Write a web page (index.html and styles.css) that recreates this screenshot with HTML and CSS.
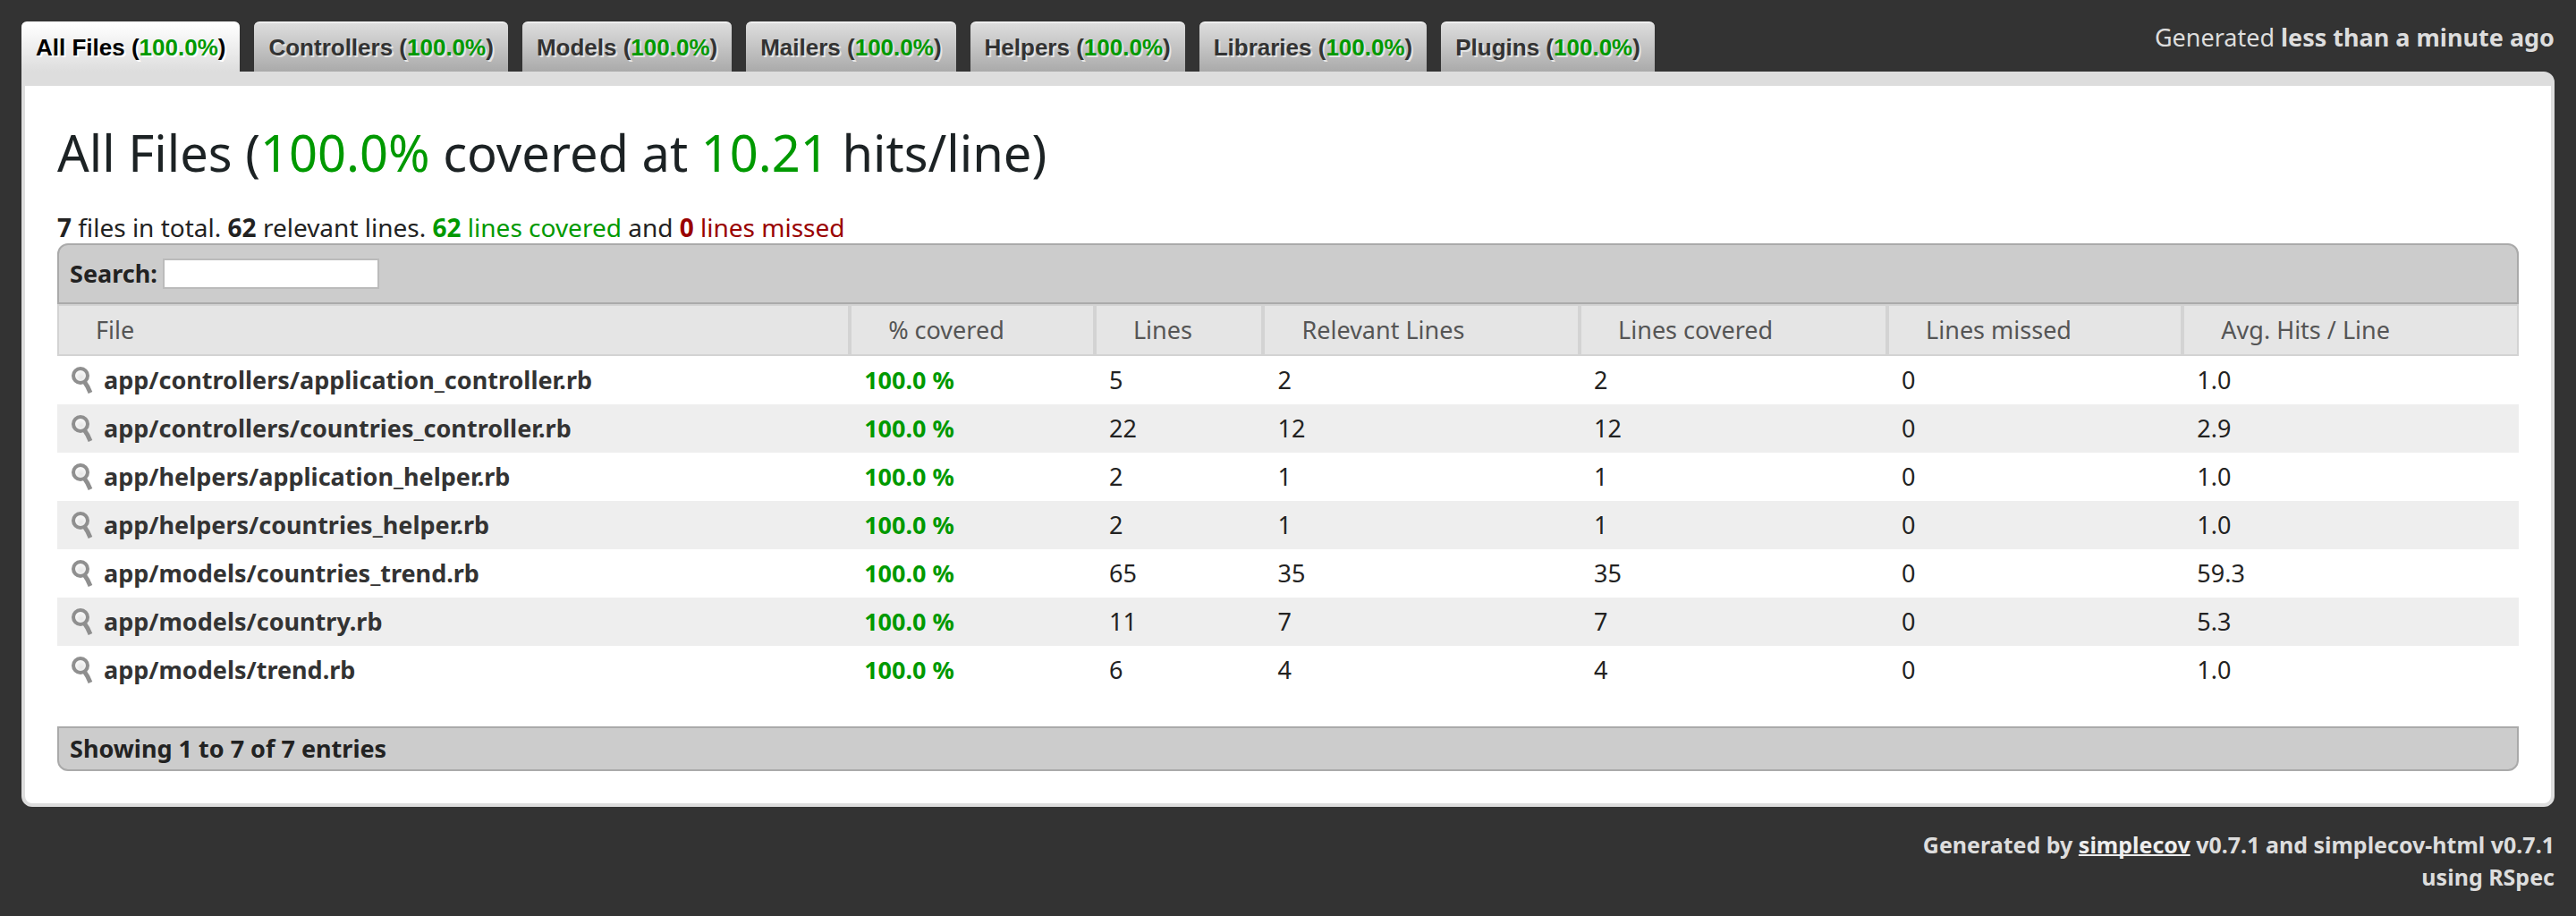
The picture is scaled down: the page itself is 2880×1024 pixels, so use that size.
FILE: index.html
```
<!DOCTYPE html>
<html lang="en">
<head>
<meta charset="utf-8">
<title>Code coverage</title>
<link rel="stylesheet" href="styles.css">
</head>
<body>
<svg class="sprite" aria-hidden="true">
  <defs>
    <radialGradient id="lens-fill" cx="55%" cy="60%" r="60%">
      <stop offset="0" stop-color="#e6e6e6"/>
      <stop offset="1" stop-color="#ffffff"/>
    </radialGradient>
  </defs>
  <symbol id="lens" viewBox="0 0 24 30">
    <path d="M14.500 17 L18 22.500 L21 29" fill="none" stroke="#8f8f8f" stroke-width="5"/>
    <circle cx="10" cy="10" r="8" fill="url(#lens-fill)" stroke="#8f8f8f" stroke-width="4"/>
  </symbol>
</svg>
<header class="top">
  <nav class="tabs">
    <a class="tab current" href="#all-files">All Files (<span class="green">100.0%</span>)</a>
    <a class="tab" href="#controllers">Controllers (<span class="green">100.0%</span>)</a>
    <a class="tab" href="#models">Models (<span class="green">100.0%</span>)</a>
    <a class="tab" href="#mailers">Mailers (<span class="green">100.0%</span>)</a>
    <a class="tab" href="#helpers">Helpers (<span class="green">100.0%</span>)</a>
    <a class="tab" href="#libraries">Libraries (<span class="green">100.0%</span>)</a>
    <a class="tab" href="#plugins">Plugins (<span class="green">100.0%</span>)</a>
  </nav>
  <p class="timestamp">Generated <b>less than a minute ago</b></p>
</header>
<main class="content" id="all-files">
  <h1>All Files (<span class="green">100.0%</span> covered at <span class="green">10.21</span> hits/line)</h1>
  <p class="summary"><b>7</b> files in total. <b>62</b> relevant lines. <span class="green"><b>62</b> lines covered</span> and <span class="red"><b>0</b> lines missed</span></p>
  <div class="bar search-bar">
    <label for="search">Search:</label>
    <input id="search" class="search" type="text">
  </div>
  <table class="files">
    <colgroup>
      <col class="c-file"><col class="c-covered"><col class="c-lines"><col class="c-relevant"><col class="c-hit"><col class="c-missed"><col class="c-avg">
    </colgroup>
    <thead>
      <tr><th>File</th><th>% covered</th><th>Lines</th><th>Relevant Lines</th><th>Lines covered</th><th>Lines missed</th><th>Avg. Hits / Line</th></tr>
    </thead>
    <tbody>
      <tr><td><a class="src" href="#f1"><svg class="lens"><use href="#lens"/></svg>app/controllers/application_controller.rb</a></td><td class="pct">100.0 %</td><td>5</td><td>2</td><td>2</td><td>0</td><td>1.0</td></tr>
      <tr><td><a class="src" href="#f2"><svg class="lens"><use href="#lens"/></svg>app/controllers/countries_controller.rb</a></td><td class="pct">100.0 %</td><td>22</td><td>12</td><td>12</td><td>0</td><td>2.9</td></tr>
      <tr><td><a class="src" href="#f3"><svg class="lens"><use href="#lens"/></svg>app/helpers/application_helper.rb</a></td><td class="pct">100.0 %</td><td>2</td><td>1</td><td>1</td><td>0</td><td>1.0</td></tr>
      <tr><td><a class="src" href="#f4"><svg class="lens"><use href="#lens"/></svg>app/helpers/countries_helper.rb</a></td><td class="pct">100.0 %</td><td>2</td><td>1</td><td>1</td><td>0</td><td>1.0</td></tr>
      <tr><td><a class="src" href="#f5"><svg class="lens"><use href="#lens"/></svg>app/models/countries_trend.rb</a></td><td class="pct">100.0 %</td><td>65</td><td>35</td><td>35</td><td>0</td><td>59.3</td></tr>
      <tr><td><a class="src" href="#f6"><svg class="lens"><use href="#lens"/></svg>app/models/country.rb</a></td><td class="pct">100.0 %</td><td>11</td><td>7</td><td>7</td><td>0</td><td>5.3</td></tr>
      <tr><td><a class="src" href="#f7"><svg class="lens"><use href="#lens"/></svg>app/models/trend.rb</a></td><td class="pct">100.0 %</td><td>6</td><td>4</td><td>4</td><td>0</td><td>1.0</td></tr>
    </tbody>
  </table>
  <div class="bar info-bar">Showing 1 to 7 of 7 entries</div>
</main>
<footer class="credits">
  Generated by <a href="#simplecov">simplecov</a> v0.7.1 and simplecov-html v0.7.1<br>using RSpec
</footer>
</body>
</html>
```

FILE: styles.css
```
* {
  box-sizing: border-box;
}

body {
  margin: 0;
  padding: 24px;
  background: #333;
  color: #222;
  font: 27px/36px "Noto Sans", "Open Sans", sans-serif;
}

.sprite {
  position: absolute;
  width: 0;
  height: 0;
}

.green {
  color: #090;
}

.red {
  color: #900;
}

.top {
  display: flex;
  justify-content: space-between;
  align-items: flex-start;
}

.tabs {
  display: flex;
  gap: 16px;
}

.tab {
  height: 56px;
  padding: 9px 16px;
  border-top: 2px solid #efefef;
  border-radius: 6px 6px 0 0;
  background: linear-gradient(#ddd, #aaa);
  color: #333;
  font: bold 26px/36px "Liberation Sans", Arial, sans-serif;
  text-decoration: none;
  text-shadow: 2px 2px 0 #e5e5e5;
  white-space: nowrap;
}

.tab.current {
  border-top-color: #fff;
  background: linear-gradient(#fff, #ddd);
  color: #000;
  text-shadow: 2px 2px 0 #fff;
}

.timestamp {
  margin: 0;
  color: #ddd;
}

.content {
  padding: 44px 36px 36px;
  border: 4px solid #ddd;
  border-top-width: 16px;
  border-radius: 0 12px 12px 12px;
  background: #fff;
}

h1 {
  margin: 0 0 36px;
  color: #1c2224;
  font-size: 56px;
  font-weight: 400;
  line-height: 60px;
}

.summary {
  margin: 0;
  font-size: 28px;
}

.bar {
  border: 2px solid #aaa;
  background: #ccc;
  font-weight: 700;
}

.search-bar {
  display: flex;
  align-items: center;
  gap: 6px;
  height: 68px;
  padding: 0 12px;
  border-radius: 12px 12px 0 0;
}

.search {
  width: 242px;
  height: 34px;
  padding: 0 4px;
  border: 2px solid #bbb;
  background: #fff;
  font: inherit;
}

.files {
  width: 100%;
  margin-bottom: 36px;
  border-collapse: separate;
  border-spacing: 0;
  table-layout: fixed;
}

.c-file { width: 32.2%; }
.c-covered { width: 9.95%; }
.c-lines { width: 6.85%; }
.c-relevant { width: 12.85%; }
.c-hit { width: 12.5%; }
.c-missed { width: 12%; }
.c-avg { width: 13.65%; }

th {
  height: 58px;
  padding: 0 41px;
  border: 2px solid #d3d3d3;
  background: #e5e5e5;
  color: #555;
  font-weight: 400;
  text-align: left;
}

td {
  height: 54px;
  padding: 0 16px;
}

tbody tr:nth-child(even) {
  background: #eee;
}

.pct {
  color: #090;
  font-weight: 700;
}

.src {
  display: flex;
  align-items: center;
  gap: 12px;
  color: #333;
  font-weight: 700;
  text-decoration: none;
}

.lens {
  width: 24px;
  height: 30px;
}

.info-bar {
  padding: 5px 12px;
  border-radius: 0 0 12px 12px;
}

.credits {
  margin-top: 24px;
  color: #ddd;
  font-size: 25px;
  font-weight: 700;
  text-align: right;
}

.credits a {
  color: #eee;
  text-decoration-thickness: 2px;
  text-decoration-skip-ink: none;
}
```
